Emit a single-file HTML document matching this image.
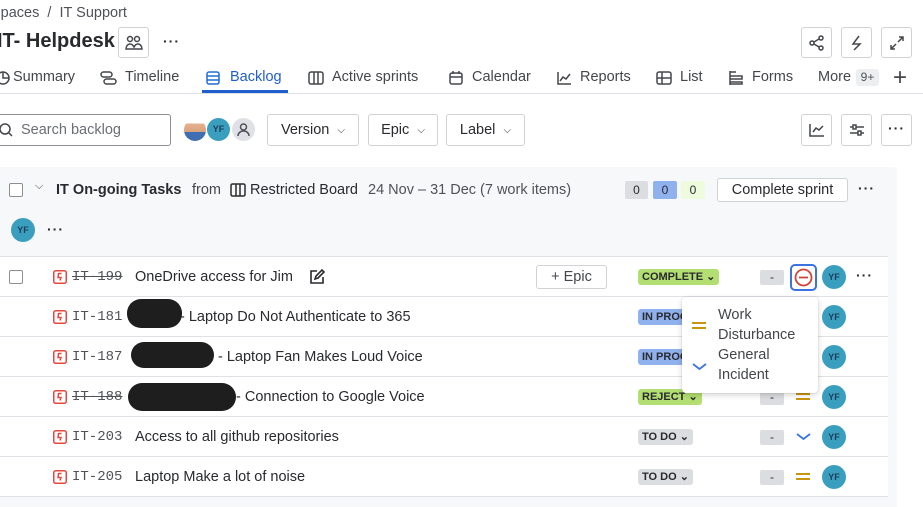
<!DOCTYPE html>
<html><head><meta charset="utf-8"><style>
*{box-sizing:border-box;margin:0;padding:0}
body{width:923px;height:504px;overflow:hidden;background:#fff;font-family:"Liberation Sans",sans-serif;color:#292a2e;font-size:14px;position:relative}
.a{position:absolute;white-space:nowrap}
.btn{position:absolute;border:1px solid #d0d2d6;border-radius:3px;background:#fff;display:flex;align-items:center;justify-content:center}
.tab{position:absolute;top:69px;font-size:14.5px;color:#44464c;white-space:nowrap}
.row{position:absolute;left:0;width:888px;height:40px;background:#fff;border-bottom:1px solid #dfe1e6}
.key{position:absolute;left:72px;top:12px;font-family:"Liberation Mono",monospace;font-size:14px;color:#505258}
.sum{position:absolute;top:12px;font-size:14.5px;color:#292a2e}
.bug{position:absolute;left:53px;top:13px}
.loz{position:absolute;left:638px;top:12px;height:16px;padding:0 4px;font-size:11px;font-weight:bold;border-radius:3px;line-height:16px;color:#292a2e}
.dash{position:absolute;left:760px;top:13px;width:24px;height:15px;background:#dcdde1;border-radius:2px;text-align:center;font-size:12px;line-height:15px;color:#292a2e}
.yf{position:absolute;width:24px;height:24px;border-radius:50%;background:#3a9fbf;color:#1d3e57;font-size:9px;font-weight:bold;text-align:center;line-height:24px}
.blob{position:absolute;background:#1e1e1e;border-radius:14px}
.med{position:absolute;left:796px;width:14px;height:7px;border-top:2px solid #c9950c;border-bottom:2px solid #c9950c}
.cb{position:absolute;width:14px;height:14px;border:1.5px solid #8c8f97;border-radius:2px;background:#fff}
.dots{position:absolute;font-weight:bold;letter-spacing:1px;font-size:14px}
</style></head><body>
<div class="a" style="left:-9px;top:5px;color:#505258;font-size:14.5px">Spaces &nbsp;/&nbsp; IT Support</div>
<div class="a" style="left:-3px;top:30px;font-size:20px;font-weight:bold;color:#292a2e">IT- Helpdesk</div>
<div class="btn" style="left:118px;top:27px;width:31px;height:31px"><svg width="18" height="16" viewBox="0 0 18 16" fill="none" stroke="#44464c" stroke-width="1.5"><circle cx="5" cy="4" r="2.5"/><circle cx="12" cy="4" r="2.5"/><path d="M1 14c0-3 2-5 4-5s3 1 4 3c1-2 2-3 4-3s4 2 4 5z"/></svg></div>
<div class="dots" style="left:163px;top:33px">···</div>
<div class="btn" style="left:801px;top:27px;width:31px;height:31px"><svg width="16" height="16" fill="none" stroke="#44464c" stroke-width="1.5"><circle cx="3" cy="8" r="2"/><circle cx="12" cy="3" r="2"/><circle cx="12" cy="13" r="2"/><path d="M5 7l5-3M5 9l5 3"/></svg></div>
<div class="btn" style="left:841px;top:27px;width:31px;height:31px"><svg width="16" height="16" fill="none" stroke="#44464c" stroke-width="1.5"><path d="M10 1L4 9h7L5 15"/></svg></div>
<div class="btn" style="left:881px;top:27px;width:31px;height:31px"><svg width="16" height="16" fill="none" stroke="#44464c" stroke-width="1.5"><path d="M9 7l5-5M10 2h4v4M7 9l-5 5M2 10v4h4"/></svg></div>

<svg class="a" style="left:-4px;top:71px" width="14" height="14" fill="none" stroke="#44464c" stroke-width="1.5"><circle cx="7" cy="7" r="6"/><path d="M7 1v6h6"/></svg>
<div class="tab" style="left:13px">Summary</div>
<svg class="a" style="left:100px;top:71px" width="17" height="14" fill="none" stroke="#44464c" stroke-width="1.5"><rect x="1" y="1" width="11" height="5" rx="2.5"/><rect x="4" y="8" width="12" height="5" rx="2.5"/></svg>
<div class="tab" style="left:125px">Timeline</div>
<svg class="a" style="left:206px;top:71px" width="14" height="14" fill="none" stroke="#1f6fd6" stroke-width="1.5"><rect x="1" y="1" width="12" height="12" rx="2"/><path d="M1 5h12M1 9h12"/></svg>
<div class="tab" style="left:230px;color:#1f5fc9">Backlog</div>
<svg class="a" style="left:308px;top:71px" width="16" height="14" fill="none" stroke="#44464c" stroke-width="1.5"><rect x="1" y="1" width="14" height="12" rx="2"/><path d="M6 1v12M10 1v12"/></svg>
<div class="tab" style="left:332px">Active sprints</div>
<svg class="a" style="left:449px;top:70px" width="14" height="15" fill="none" stroke="#44464c" stroke-width="1.5"><rect x="1" y="3" width="12" height="11" rx="2"/><path d="M1 7h12M4 1v3M10 1v3"/></svg>
<div class="tab" style="left:472px">Calendar</div>
<svg class="a" style="left:557px;top:71px" width="15" height="14" fill="none" stroke="#44464c" stroke-width="1.5"><path d="M1 1v12h13M3 10l3-4 3 2 4-5"/></svg>
<div class="tab" style="left:580px">Reports</div>
<svg class="a" style="left:656px;top:71px" width="16" height="14" fill="none" stroke="#44464c" stroke-width="1.5"><rect x="1" y="1" width="14" height="12" rx="2"/><path d="M1 7h14M6 1v12"/></svg>
<div class="tab" style="left:680px">List</div>
<svg class="a" style="left:729px;top:70px" width="15" height="15" fill="none" stroke="#44464c" stroke-width="1.5"><path d="M1 1v14M1 2h6M1 6h12v3H1M1 12h12v2H1"/></svg>
<div class="tab" style="left:752px">Forms</div>
<div class="tab" style="left:818px">More</div>
<div class="a" style="left:856px;top:69px;width:23px;height:17px;background:#eceef0;border-radius:3px;font-size:12px;color:#505258;text-align:center;line-height:17px">9+</div>
<div class="a" style="left:893px;top:64px;font-size:24px;font-weight:300;color:#44464c">+</div>
<div class="a" style="left:202px;top:90px;width:86px;height:3px;background:#1f5fc9"></div>
<div class="a" style="left:0;top:93px;width:923px;height:1px;background:#dcdfe4"></div>

<div class="btn" style="left:-10px;top:114px;width:181px;height:32px;justify-content:flex-start;border-color:#8c8f97;padding-left:8px"><svg width="14" height="14" fill="none" stroke="#44464c" stroke-width="1.5"><circle cx="6" cy="6" r="5"/><path d="M10 10l3 3"/></svg><span style="margin-left:8px;color:#6b6e76;font-size:14.5px">Search backlog</span></div>
<div class="a" style="left:184px;top:119px;width:22px;height:22px;border-radius:50%;background:linear-gradient(#fff 0,#fff 20%,#e6b38f 20%,#d7a07a 60%,#3f6fb0 60%)"></div>
<div class="yf" style="left:207px;top:118px;width:23px;height:23px;line-height:23px">YF</div>
<div class="a" style="left:232px;top:118px;width:23px;height:23px;border-radius:50%;background:#dfe1e6"><svg width="23" height="23" fill="none" stroke="#505258" stroke-width="1.5"><circle cx="11.5" cy="9" r="3"/><path d="M6 18c0-3 2.5-5 5.5-5s5.5 2 5.5 5"/></svg></div>
<div class="btn" style="left:267px;top:114px;width:92px;height:32px;font-size:14.5px">Version&nbsp;&nbsp;<span style="font-size:10px">⌵</span></div>
<div class="btn" style="left:368px;top:114px;width:70px;height:32px;font-size:14.5px">Epic&nbsp;&nbsp;<span style="font-size:10px">⌵</span></div>
<div class="btn" style="left:446px;top:114px;width:79px;height:32px;font-size:14.5px">Label&nbsp;&nbsp;<span style="font-size:10px">⌵</span></div>
<div class="btn" style="left:801px;top:114px;width:31px;height:32px"><svg width="16" height="14" fill="none" stroke="#44464c" stroke-width="1.5"><path d="M1 1v12h14M4 9l3-4 3 2 4-4"/></svg></div>
<div class="btn" style="left:841px;top:114px;width:31px;height:32px"><svg width="16" height="14" fill="none" stroke="#44464c" stroke-width="1.5"><path d="M1 4h14M1 10h14"/><rect x="4" y="2" width="3" height="4" fill="#fff"/><rect x="9" y="8" width="3" height="4" fill="#fff"/></svg></div>
<div class="btn" style="left:881px;top:114px;width:31px;height:32px"><span style="font-weight:bold;letter-spacing:1px;margin-top:-4px">···</span></div>

<div class="a" style="left:0;top:167px;width:897px;height:340px;background:#f7f8f9;border-radius:0 4px 0 0"></div>
<div class="cb" style="left:9px;top:183px"></div>
<div class="a" style="left:35px;top:180px;font-size:11px;color:#44464c">⌵</div>
<div class="a" style="left:56px;top:182px;font-weight:bold;font-size:14.5px">IT On-going Tasks</div>
<div class="a" style="left:192px;top:182px;color:#44464c;font-size:14.5px">from</div>
<svg class="a" style="left:230px;top:183px" width="16" height="14" fill="none" stroke="#292a2e" stroke-width="1.5"><rect x="1" y="1" width="14" height="12" rx="1.5"/><path d="M6 1v12M10 1v12"/></svg>
<div class="a" style="left:250px;top:182px;color:#292a2e;font-size:14.5px">Restricted Board</div>
<div class="a" style="left:368px;top:182px;color:#505258;font-size:14.5px">24 Nov – 31 Dec (7 work items)</div>
<div class="a" style="left:625px;top:181px;width:23px;height:18px;background:#dcdde1;border-radius:2px;text-align:center;font-size:12px;line-height:18px">0</div>
<div class="a" style="left:653px;top:181px;width:24px;height:18px;background:#8fb1ee;border-radius:2px;text-align:center;font-size:12px;line-height:18px">0</div>
<div class="a" style="left:681px;top:181px;width:24px;height:18px;background:#eefbdc;border-radius:2px;text-align:center;font-size:12px;line-height:18px">0</div>
<div class="btn" style="left:717px;top:178px;width:131px;height:24px;font-size:14.5px">Complete sprint</div>
<div class="dots" style="left:858px;top:180px">···</div>
<div class="yf" style="left:11px;top:218px">YF</div>
<div class="dots" style="left:47px;top:221px">···</div>

<svg width="0" height="0" style="position:absolute"><defs><symbol id="bg" viewBox="0 0 14 14"><rect x="0.75" y="0.75" width="12.5" height="12.5" rx="2" fill="none" stroke="#e2483d" stroke-width="1.5"/><path d="M8.5 3.5H5.5L5 7.5h3L7 10.5" fill="none" stroke="#e2483d" stroke-width="1.5"/></symbol></defs></svg>

<div class="row" style="top:256px;border-top:1px solid #dfe1e6;height:41px">
 <div class="cb" style="left:9px;top:13px"></div>
 <svg class="bug" width="14" height="14"><use href="#bg"/></svg><div class="key" style="text-decoration:line-through">IT-199</div>
 <div class="sum" style="left:135px">OneDrive access for Jim</div>
 <svg class="a" style="left:309px;top:12px" width="16" height="16" fill="none" stroke="#292a2e" stroke-width="1.6"><path d="M8 2H2v12h12V8"/><path d="M6 10l1-3 6-6 2 2-6 6z"/></svg>
 <div class="btn" style="left:536px;top:8px;width:71px;height:24px;color:#44464c;font-size:14.5px">+ Epic</div>
 <div class="loz" style="background:#b3df72">COMPLETE ⌄</div>
 <div class="dash">-</div>
 <div class="a" style="left:790px;top:7px;width:27px;height:27px;border:2px solid #3b73e0;border-radius:5px"><svg width="23" height="23" fill="none" stroke="#d0443a" stroke-width="1.8"><circle cx="11.5" cy="11.5" r="8"/><path d="M7 11.5h9"/></svg></div>
 <div class="yf" style="left:822px;top:8px">YF</div>
 <div class="dots" style="left:856px;top:10px">···</div>
</div>
<div class="row" style="top:297px">
 <svg class="bug" width="14" height="14"><use href="#bg"/></svg><div class="key">IT-181</div>
 <div class="blob" style="left:127px;top:2px;width:55px;height:29px"></div>
 <div class="sum" style="left:180px">- Laptop Do Not Authenticate to 365</div>
 <div class="loz" style="background:#8fb1ee">IN PROGRESS</div>
 <div class="yf" style="left:822px;top:8px">YF</div>
</div>
<div class="row" style="top:337px">
 <svg class="bug" width="14" height="14"><use href="#bg"/></svg><div class="key">IT-187</div>
 <div class="blob" style="left:131px;top:5px;width:83px;height:26px"></div>
 <div class="sum" style="left:218px">- Laptop Fan Makes Loud Voice</div>
 <div class="loz" style="background:#8fb1ee">IN PROGRESS</div>
 <div class="yf" style="left:822px;top:8px">YF</div>
</div>
<div class="row" style="top:377px">
 <svg class="bug" width="14" height="14"><use href="#bg"/></svg><div class="key" style="text-decoration:line-through">IT-188</div>
 <div class="blob" style="left:128px;top:6px;width:108px;height:28px"></div>
 <div class="sum" style="left:236px">- Connection to Google Voice</div>
 <div class="loz" style="background:#b3df72">REJECT ⌄</div>
 <div class="dash">-</div>
 <div class="med" style="top:16px"></div>
 <div class="yf" style="left:822px;top:8px">YF</div>
</div>
<div class="row" style="top:417px">
 <svg class="bug" width="14" height="14"><use href="#bg"/></svg><div class="key">IT-203</div>
 <div class="sum" style="left:135px">Access to all github repositories</div>
 <div class="loz" style="background:#dcdde1">TO DO ⌄</div>
 <div class="dash">-</div>
 <svg class="a" style="left:796px;top:16px" width="15" height="8" fill="none" stroke="#3b73e0" stroke-width="1.8"><path d="M1 1l6.5 5L14 1"/></svg>
 <div class="yf" style="left:822px;top:8px">YF</div>
</div>
<div class="row" style="top:457px">
 <svg class="bug" width="14" height="14"><use href="#bg"/></svg><div class="key">IT-205</div>
 <div class="sum" style="left:135px">Laptop Make a lot of noise</div>
 <div class="loz" style="background:#dcdde1">TO DO ⌄</div>
 <div class="dash">-</div>
 <div class="med" style="top:16px"></div>
 <div class="yf" style="left:822px;top:8px">YF</div>
</div>

<div class="a" style="left:682px;top:297px;width:136px;height:96px;background:#fff;border-radius:4px;box-shadow:0 2px 6px rgba(0,0,0,.18),0 0 1px rgba(0,0,0,.2)">
 <div class="a" style="left:10px;top:25px;width:14px;height:7px;border-top:2px solid #c9950c;border-bottom:2px solid #c9950c"></div>
 <div class="a" style="left:36px;top:8px;color:#44464c;line-height:20px;white-space:normal;font-size:14.5px">Work<br>Disturbance<br>General<br>Incident</div>
 <svg class="a" style="left:10px;top:66px" width="15" height="8" fill="none" stroke="#3b73e0" stroke-width="1.8"><path d="M1 1l6.5 5L14 1"/></svg>
</div>
</body></html>
